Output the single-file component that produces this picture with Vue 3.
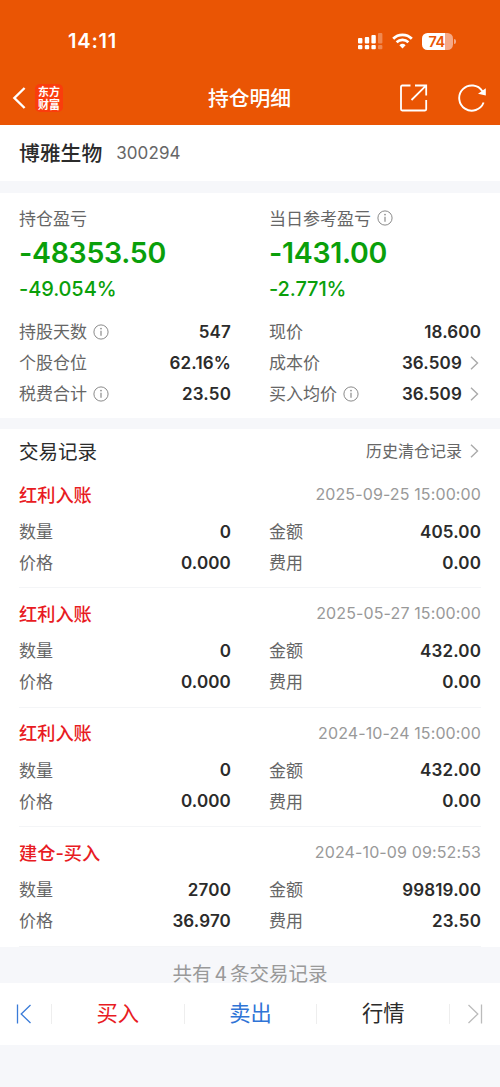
<template>
  <div class="page">
    <header class="header">
      <div class="status_bar">
        <span class="time">14:11</span>
        <div class="status_icons">
          <svg class="signal" width="25" height="17" viewBox="0 0 25 17" fill="#fff">
            <rect x="0" y="5" width="4.4" height="5.4" rx="1" />
            <rect x="6.8" y="4" width="4.4" height="6.4" rx="1" />
            <rect x="13.4" y="2" width="4.4" height="8.4" rx="1" />
            <rect x="0" y="12" width="4.4" height="4.3" rx="1" />
            <rect x="6.8" y="12" width="4.4" height="4.3" rx="1" />
            <rect x="13.4" y="12" width="4.4" height="4.3" rx="1" />
            <g opacity="0.3">
              <rect x="20" y="0" width="4.4" height="10.4" rx="1" />
              <rect x="20" y="12" width="4.4" height="4.3" rx="1" />
            </g>
          </svg>
          <svg class="wifi" width="21" height="16" viewBox="0 0 21 16">
            <path d="M1.2 5.8a13.2 13.2 0 0 1 18.6 0" fill="none" stroke="#fff" stroke-width="2.8" />
            <path d="M4.6 9.3a8.4 8.4 0 0 1 11.8 0" fill="none" stroke="#fff" stroke-width="2.6" />
            <path d="M7.4 12.2a4.5 4.5 0 0 1 6.2 0L10.5 15.6z" fill="#fff" />
          </svg>
          <div class="battery"><span>74</span></div>
        </div>
      </div>
      <nav class="nav">
        <div class="nav_left">
          <svg width="14" height="22" viewBox="0 0 14 22">
            <path d="M12.6 1L2.400 11l10.200 10" fill="none" stroke="#fff" stroke-width="2.400" />
          </svg>
          <div class="logo"><span>东方</span><span>财富</span></div>
        </div>
        <h1 class="title">持仓明细</h1>
        <div class="nav_right">
          <svg width="28" height="28" viewBox="0 0 28 28" fill="none" stroke="#fff" stroke-width="1.8">
            <path d="M10.500 1.500H2.200a1.200 1.200 0 0 0-1.200 1.200v22.600a1.200 1.200 0 0 0 1.200 1.200h22.800a1.200 1.200 0 0 0 1.200-1.200V16" />
            <path d="M15 1.500h11.200V11.500M26 1.700L11.500 16" />
          </svg>
          <svg width="28" height="28" viewBox="0 0 28 28">
            <path d="M25.600 18.500A12.600 12.600 0 1 1 24.400 7.200" fill="none" stroke="#fff" stroke-width="1.9" />
            <path d="M27.800 4.300V11.400L20 9.700z" fill="#fff" />
          </svg>
        </div>
      </nav>
    </header>

    <section class="stock">
      <span class="stock_name">博雅生物</span>
      <span class="stock_code">300294</span>
    </section>

    <section class="summary">
      <div v-for="col in summary" :key="col.label" class="col">
        <div class="label profit_label">
          <span>{{ col.label }}</span>
          <svg v-if="col.info" class="info" viewBox="0 0 16 16"><use href="#info_icon" /></svg>
        </div>
        <div class="profit">{{ col.profit }}</div>
        <div class="percent">{{ col.percent }}</div>
        <div v-for="row in col.rows" :key="row.label" class="row">
          <div class="label">
            <span>{{ row.label }}</span>
            <svg v-if="row.info" class="info" viewBox="0 0 16 16"><use href="#info_icon" /></svg>
          </div>
          <div class="value">
            {{ row.value }}
            <svg v-if="row.link" class="arrow" viewBox="0 0 9 14"><use href="#arrow_icon" /></svg>
          </div>
        </div>
      </div>
    </section>

    <section class="records">
      <div class="records_head">
        <h2>交易记录</h2>
        <div class="history">
          <span>历史清仓记录</span>
          <svg class="arrow" viewBox="0 0 9 14"><use href="#arrow_icon" /></svg>
        </div>
      </div>
      <div v-for="item in records" :key="item.time" class="record">
        <div class="record_head">
          <span class="record_type">{{ item.type }}</span>
          <span class="record_time">{{ item.time }}</span>
        </div>
        <div class="record_body">
          <div class="row"><div class="label"><span>数量</span></div><div class="value">{{ item.count }}</div></div>
          <div class="row"><div class="label"><span>金额</span></div><div class="value">{{ item.amount }}</div></div>
          <div class="row"><div class="label"><span>价格</span></div><div class="value">{{ item.price }}</div></div>
          <div class="row"><div class="label"><span>费用</span></div><div class="value">{{ item.fee }}</div></div>
        </div>
      </div>
    </section>

    <div class="total">共有<span>4</span>条交易记录</div>

    <footer class="tabs">
      <div class="tab_edge tab_first">
        <svg width="16" height="20" viewBox="0 0 16 20">
          <path d="M1.500 0.500v19M14.500 1L5.200 10l9.300 9" fill="none" stroke="#3a7bd8" stroke-width="1.300" />
        </svg>
      </div>
      <div class="tab buy">买入</div>
      <div class="tab sell">卖出</div>
      <div class="tab">行情</div>
      <div class="tab_edge tab_last">
        <svg width="16" height="20" viewBox="0 0 16 20">
          <path d="M14.500 0.500v19M1.500 1l9.300 9-9.300 9" fill="none" stroke="#bbb" stroke-width="1.300" />
        </svg>
      </div>
    </footer>

    <svg class="symbols">
      <symbol id="info_icon" viewBox="0 0 16 16">
        <circle cx="8" cy="8" r="7.100" fill="none" stroke="#8a8a8a" stroke-width="1" />
        <path d="M8 6.800v5" stroke="#8a8a8a" stroke-width="1.200" />
        <circle cx="8" cy="4.600" r="0.850" fill="#8a8a8a" />
      </symbol>
      <symbol id="arrow_icon" viewBox="0 0 9 14">
        <path d="M1 0.800L7.500 7 1 13.200" fill="none" stroke="#aaa" stroke-width="1.400" />
      </symbol>
    </svg>
  </div>
</template>

<script setup>
import { ref } from 'vue';

const summary = ref([
  {
    label: '持仓盈亏',
    profit: '-48353.50',
    percent: '-49.054%',
    rows: [
      { label: '持股天数', value: '547', info: true },
      { label: '个股仓位', value: '62.16%' },
      { label: '税费合计', value: '23.50', info: true },
    ],
  },
  {
    label: '当日参考盈亏',
    info: true,
    profit: '-1431.00',
    percent: '-2.771%',
    rows: [
      { label: '现价', value: '18.600' },
      { label: '成本价', value: '36.509', link: true },
      { label: '买入均价', value: '36.509', info: true, link: true },
    ],
  },
]);

const records = ref([
  { type: '红利入账', time: '2025-09-25 15:00:00', count: '0', price: '0.000', amount: '405.00', fee: '0.00' },
  { type: '红利入账', time: '2025-05-27 15:00:00', count: '0', price: '0.000', amount: '432.00', fee: '0.00' },
  { type: '红利入账', time: '2024-10-24 15:00:00', count: '0', price: '0.000', amount: '432.00', fee: '0.00' },
  { type: '建仓-买入', time: '2024-10-09 09:52:53', count: '2700', price: '36.970', amount: '99819.00', fee: '23.50' },
]);
</script>

<style>
body {
  margin: 0;
  background: #f6f7fa;
}
</style>

<style scoped>
.page {
  width: 500px;
  height: 1087px;
  overflow: hidden;
  background: #f6f7fa;
  color: #2b2b2b;
  font-family: Inter, "Noto Sans CJK SC", sans-serif;
  font-size: 17px;
}

.page * {
  box-sizing: border-box;
}

.header {
  height: 125px;
  background: #ea5504;
  color: #fff;
}

.status_bar {
  display: flex;
  justify-content: space-between;
  align-items: center;
  height: 70px;
  padding: 12px 44px 0 68px;
}

.time {
  font-size: 20px;
  font-weight: 600;
  letter-spacing: 0.8px;
}

.status_icons {
  display: flex;
  align-items: center;
}

.wifi {
  margin: 0 9px 0 9px;
}

.battery {
  position: relative;
  width: 31px;
  height: 17px;
  margin-right: 3px;
  padding-right: 2px;
  border-radius: 5.5px;
  background: linear-gradient(90deg, #fff 74%, #f5a987 74%);
  color: #ea5504;
  font-size: 14.5px;
  font-weight: 600;
  letter-spacing: -0.5px;
  line-height: 17px;
  text-align: center;
}

.battery::after {
  content: "";
  position: absolute;
  right: -3px;
  top: 6px;
  width: 2px;
  height: 5px;
  border-radius: 0 2px 2px 0;
  background: #f5a987;
}

.nav {
  display: grid;
  grid-template-columns: 1fr auto 1fr;
  align-items: center;
  height: 55px;
  padding: 0 14px 0 12px;
}

.nav_left {
  display: flex;
  align-items: center;
  gap: 9px;
}

.logo {
  display: flex;
  flex-direction: column;
  align-items: center;
  justify-content: center;
  width: 28px;
  height: 28px;
  border-radius: 5px;
  background: #fa3c0c;
  font-family: "Noto Sans CJK SC", sans-serif;
  font-size: 11px;
  font-weight: 700;
  line-height: 12.5px;
}

.title {
  margin: 0;
  padding: 0 0 2px 1px;
  font-size: 20.8px;
  font-weight: 500;
}

.nav_right {
  display: flex;
  justify-content: flex-end;
  gap: 30px;
}

.stock {
  display: flex;
  align-items: center;
  height: 56px;
  padding: 0 19px;
  background: #fff;
}

.stock_name {
  margin-right: 14px;
  padding-bottom: 3px;
  font-size: 20.8px;
  font-weight: 500;
}

.stock_code {
  padding-bottom: 1px;
  color: #666;
  letter-spacing: 0.1px;
}

.summary {
  display: grid;
  grid-template-columns: 212px 212px;
  column-gap: 38px;
  height: 225px;
  margin-top: 12px;
  padding: 12px 19px 0;
  background: #fff;
}

.label {
  display: flex;
  align-items: center;
  color: #666;
}

.label span {
  padding-bottom: 2px;
}

.profit_label {
  height: 26px;
}

.info {
  width: 16px;
  height: 16px;
  margin-left: 6px;
}

.profit {
  height: 44px;
  color: #0a9f0a;
  font-size: 28.5px;
  font-weight: 600;
  letter-spacing: -0.3px;
  line-height: 44px;
}

.percent {
  height: 41px;
  color: #0a9f0a;
  font-size: 20px;
  font-weight: 500;
  letter-spacing: -0.1px;
  line-height: 28px;
}

.row {
  display: flex;
  justify-content: space-between;
  align-items: center;
  height: 31px;
}

.value {
  display: flex;
  align-items: center;
  font-weight: 600;
  letter-spacing: 0.15px;
}

.arrow {
  width: 9px;
  height: 14px;
  margin: 0 2px 0 8px;
}

.records {
  height: 518px;
  margin-top: 11px;
  padding: 0 19px;
  background: #fff;
}

.records_head {
  display: flex;
  justify-content: space-between;
  align-items: center;
  height: 40px;
  padding-top: 4px;
}

.records_head h2 {
  margin: 0;
  padding-bottom: 2px;
  font-size: 19.5px;
  font-weight: 400;
}

.history {
  display: flex;
  align-items: center;
  color: #666;
  font-size: 16px;
}

.history span {
  padding-bottom: 2px;
}

.record {
  height: 119.4px;
  padding-top: 9px;
  border-bottom: 1px solid #f4f5f7;
}

.record_head {
  display: flex;
  justify-content: space-between;
  align-items: center;
  height: 32px;
  margin-bottom: 6px;
}

.record_type {
  padding-bottom: 1px;
  color: #e81b23;
  font-size: 18.2px;
  font-weight: 500;
}

.record_time {
  color: #999;
  font-size: 16px;
  letter-spacing: 0.12px;
}

.record_body {
  display: grid;
  grid-template-columns: 212px 212px;
  column-gap: 38px;
}

.total {
  height: 36px;
  overflow: hidden;
  padding-top: 13px;
  color: #999;
  font-size: 19.5px;
  line-height: 28px;
  text-align: center;
}

.total span {
  margin: 0 3px;
}

.tabs {
  display: flex;
  align-items: center;
  height: 62px;
  background: #fff;
  font-size: 21.3px;
}

.tab {
  flex: 1;
  height: 20px;
  border-right: 1px solid #eee;
  line-height: 19px;
  text-align: center;
}

.tab_edge {
  display: flex;
  align-items: center;
  width: 52px;
  height: 20px;
}

.tab_first {
  padding-left: 16px;
  border-right: 1px solid #eee;
}

.tab_last {
  width: 50px;
  padding-left: 17px;
}

.buy {
  color: #e81b23;
}

.sell {
  color: #2f74d6;
}

.symbols {
  display: block;
  width: 0;
  height: 0;
}
</style>
